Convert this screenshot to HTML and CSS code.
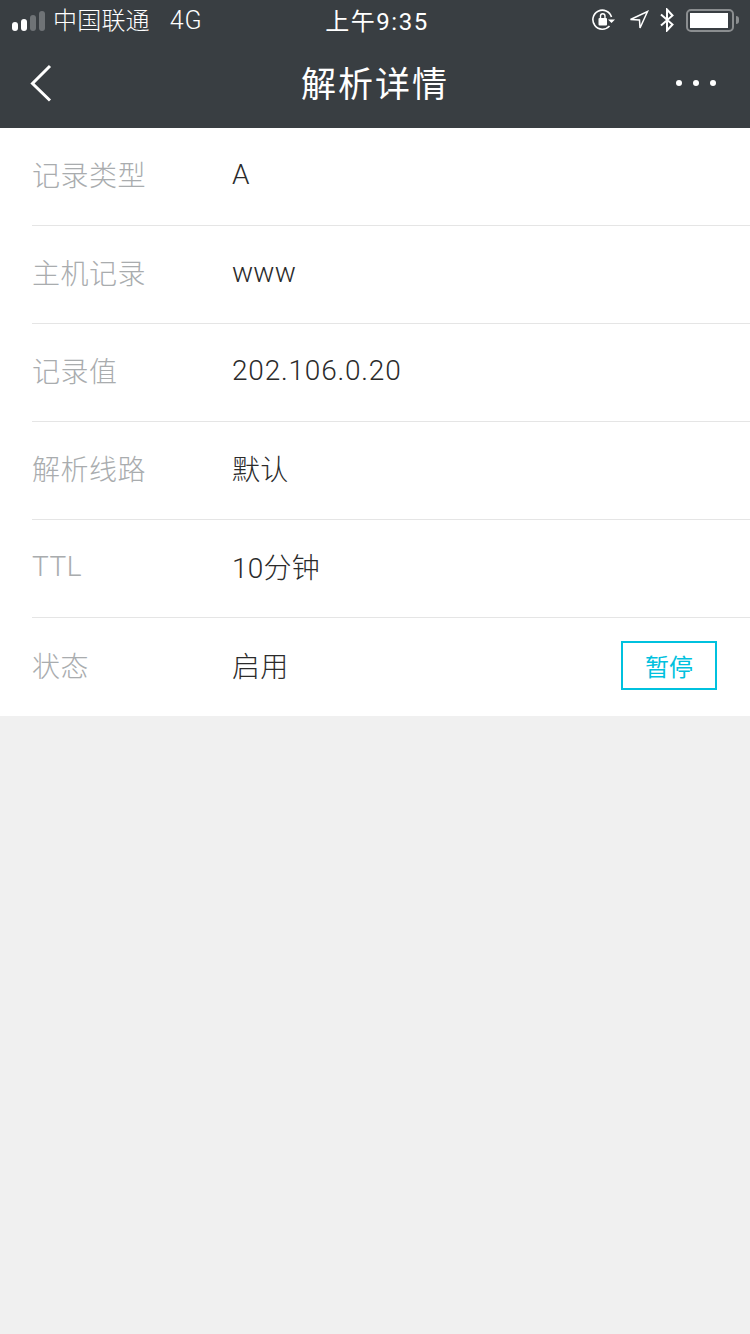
FILE: index.html
```html
<!DOCTYPE html>
<html lang="zh-CN">
<head>
  <meta charset="UTF-8" />
  <meta name="viewport" content="width=device-width, initial-scale=1.0"/>
  <title>解析详情</title>
  <link rel="stylesheet" href="styles.css">
</head>
<body>

<div class="header">
  <!-- Status bar -->
  <div class="status-bar">
    <div class="status-left">
      <div class="signal">
        <span class="dot on"></span>
        <span class="dot on"></span>
        <span class="dot off"></span>
        <span class="dot off"></span>
      </div>
      <span class="carrier">中国联通</span>
      <span class="network">4G</span>
    </div>
    <div class="status-time">上午9:35</div>
    <div class="status-right">
      <svg class="icon-lock" width="24" height="22" viewBox="0 0 24 22">
        <path d="M17.500 17A9.500 9.500 0 1 1 19.500 8" fill="none" stroke="#fff" stroke-width="1.600"/>
        <path d="M16 10.500h7l-3.500 3.500z" fill="#fff"/>
        <rect x="6.500" y="9" width="8.500" height="7.500" rx="1" fill="#fff"/>
        <path d="M8.500 9.500V7a2.200 2.200 0 0 1 4.500 0V9.500" fill="none" stroke="#fff" stroke-width="1.400"/>
      </svg>
      <svg class="icon-location" width="20" height="20" viewBox="0 0 20 20">
        <path d="M1.500 9.500L18.500 1.500L11 18L10.500 10Z" fill="none" stroke="#fff" stroke-width="1.500"/>
      </svg>
      <svg class="icon-bt" width="14" height="24" viewBox="0 0 14 24">
        <path d="M1 6.500L12.500 16.500L7 22.500V1.500L12.500 7.500L1 17.500" fill="none" stroke="#fff" stroke-width="2"/>
      </svg>
      <div class="battery">
        <div class="battery-body"><div class="battery-level"></div></div>
        <div class="battery-tip"></div>
      </div>
    </div>
  </div>

  <!-- Nav bar -->
  <div class="nav-bar">
    <svg class="back" width="24" height="38" viewBox="0 0 24 38">
      <path d="M21 2L3.500 19.500L21 36.500" fill="none" stroke="#fff" stroke-width="3"/>
    </svg>
    <div class="nav-title">解析详情</div>
    <div class="more">
      <span></span><span></span><span></span>
    </div>
  </div>
</div>

<div class="list">
  <div class="row">
    <div class="row-label">记录类型</div>
    <div class="row-value">A</div>
  </div>
  <div class="row">
    <div class="row-label">主机记录</div>
    <div class="row-value">www</div>
  </div>
  <div class="row">
    <div class="row-label">记录值</div>
    <div class="row-value ip">202.106.0.20</div>
  </div>
  <div class="row">
    <div class="row-label">解析线路</div>
    <div class="row-value">默认</div>
  </div>
  <div class="row">
    <div class="row-label">TTL</div>
    <div class="row-value">10分钟</div>
  </div>
  <div class="row">
    <div class="row-label">状态</div>
    <div class="row-value">启用</div>
    <button class="pause-btn">暂停</button>
  </div>
</div>

</body>
</html>
```

FILE: styles.css
```css
* { box-sizing: border-box; }
html, body { margin: 0; padding: 0; }
body {
  width: 750px; height: 1334px; overflow: hidden;
  background: #f0f0f0;
  font-family: Roboto, "Noto Sans CJK SC", sans-serif;
  font-weight: 300;
}
.header { background: #393e42; height: 128px; color: #fff; }

.status-bar {
  height: 40px; padding: 0 11px 0 12px;
  display: grid; grid-template-columns: 1fr auto 1fr; align-items: center;
}
.status-left { display: flex; align-items: center; }
.signal { display: flex; align-items: flex-end; gap: 3px; width: 33px; height: 20px; margin-top: 1px; }
.dot { width: 6px; background: #fff; border-radius: 3px; }
.dot:nth-child(1) { height: 9px; }
.dot:nth-child(2) { height: 12px; }
.dot:nth-child(3) { height: 16px; }
.dot:nth-child(4) { height: 20px; }
.dot.off { background: #6f7376; }
.carrier { font-size: 24px; margin: -3px 0 0 8px; letter-spacing: 0.2px; }
.network { font-size: 25px; margin-left: 20px; letter-spacing: 0.7px; }
.status-time { font-size: 24px; font-weight: 400; letter-spacing: 1.500px; margin: -2px 0 0 3px; }
.status-right { display: flex; align-items: center; justify-content: flex-end; }
.icon-lock { margin-right: 13px; }
.icon-location { margin-right: 11px; }
.icon-bt { margin-right: 12px; }
.battery { display: flex; align-items: center; }
.battery-body {
  width: 48px; height: 23px; padding: 2px;
  border: 2px solid #8b8e90; border-radius: 5px;
}
.battery-level { width: 38px; height: 15px; background: #fff; }
.battery-tip { width: 3px; height: 8px; background: #8b8e90; border-radius: 0 3px 3px 0; margin-left: 2px; }

.nav-bar {
  height: 88px; padding: 0 34px 0 29px;
  display: flex; align-items: center; justify-content: space-between;
  position: relative;
}
.nav-bar .back { margin-top: -2px; }
.nav-title {
  font-size: 35px; letter-spacing: 2px; font-weight: 400;
  position: absolute; left: 0; right: 0; text-align: center;
  margin-top: -5px;
}
.more { display: flex; gap: 11px; margin-top: -2px; }
.more span { width: 6px; height: 6px; border-radius: 50%; background: #fff; }

.list { background: #fff; }
.row {
  height: 98px; margin-left: 32px; padding: 0 33px 5px 0;
  display: flex; align-items: center;
  border-bottom: 1px solid #e5e5e5;
}
.row:last-child { border-bottom: none; }
.row-label { width: 200px; font-size: 28px; letter-spacing: 0.5px; color: #a9acae; }
.row-value { flex: 1; font-size: 28px; letter-spacing: 0.2px; color: #2b2b2b; }
.row-value.ip { letter-spacing: 0.8px; }
.pause-btn {
  width: 96px; height: 49px; padding: 0; margin-top: 2px;
  background: #fff; border: 2px solid #00c1de; border-radius: 0;
  color: #00c1de; font-size: 24px; font-family: inherit; font-weight: 400;
}
```
